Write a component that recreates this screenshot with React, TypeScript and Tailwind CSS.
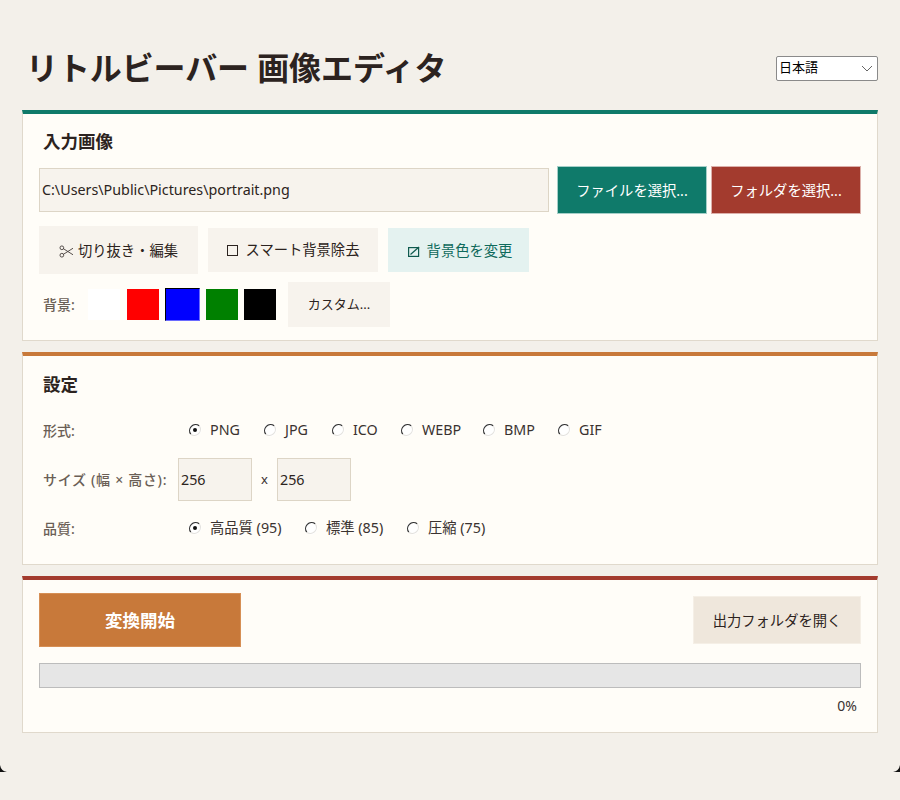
function Radio({ checked }: { checked?: boolean }) {
  return (
    <svg width="14" height="14" viewBox="0 0 14 14" className="shrink-0">
      <circle cx="7" cy="7" r="6.5" fill="#fff" />
      <path d="M11.2 2.8A6 6 0 0 0 2.8 11.2" fill="none" stroke="#333" strokeWidth="1.2" />
      <path d="M2.8 11.2A6 6 0 0 0 11.2 2.8" fill="none" stroke="#e4e2de" strokeWidth="1.2" />
      {checked && <circle cx="7" cy="7" r="2" fill="#111" />}
    </svg>
  );
}

function RadioItem({ label, checked, className }: { label: string; checked?: boolean; className: string }) {
  return (
    <div className={`flex items-center ${className}`}>
      <Radio checked={checked} />
      <span className="ml-[8px] text-[14.3px] text-[#3a3230]">{label}</span>
    </div>
  );
}

function Swatch({ color }: { color: string }) {
  return <div className={`w-[32px] h-[31px] ${color}`} />;
}

export default function App() {
  return (
    <div className="relative w-[900px] h-[800px] overflow-hidden bg-[#f3f0ea] text-[#2c2320] font-['Noto_Sans','Noto_Sans_CJK_JP',sans-serif]">
      <div className="flex flex-col px-[22px] pt-[36px]">
        <header className="flex items-center justify-between h-[64px] mb-[10px]">
          <h1 className="ml-[4px] text-[32px] font-bold leading-[46px] tracking-[-0.1px] text-[#2c2320]">リトルビーバー 画像エディタ</h1>
          <div className="relative w-[102px] h-[25px] rounded-[2px] border border-[#8a8a8a] bg-white flex items-center pl-[2px] text-[13px] text-black">
            日本語
            <svg width="12" height="7" viewBox="0 0 12 7" className="absolute right-[4px] top-[8px]">
              <path d="M1 1l5 5 5-5" fill="none" stroke="#666" strokeWidth="1" />
            </svg>
          </div>
        </header>

        <section className="h-[231px] border border-[#e0d9cc] border-t-[4px] border-t-[#0f7a6a] bg-[#fffdf8] px-[16px]">
          <h2 className="ml-[4px] mt-[13px] text-[17.5px] font-semibold leading-[28px] text-[#2c2320]">入力画像</h2>
          <div className="flex items-center mt-[11px] h-[48px]">
            <div className="w-[510px] h-[44px] flex items-center border border-[#ddd5c6] bg-[#f7f3ed] pl-[2px] text-[14.3px]">
              C:\Users\Public\Pictures\portrait.png
            </div>
            <button className="ml-[8px] w-[150px] h-[48px] pt-[2px] border border-[#a5cfc8] bg-[#0f7a6a] text-white text-[14.3px]">ファイルを選択...</button>
            <button className="ml-[4px] w-[150px] h-[48px] pt-[2px] border border-[#dcb0aa] bg-[#a33b2e] text-white text-[14.3px]">フォルダを選択...</button>
          </div>
          <div className="flex items-center mt-[12px] h-[48px]">
            <button className="flex items-center justify-center gap-[4px] w-[159px] h-[48px] pt-[2px] bg-[#f7f3ed] text-[14.3px]">
              <svg width="15" height="13" viewBox="0 0 16 14" fill="none" stroke="#4a4240" strokeWidth="1">
                <circle cx="3" cy="3" r="2" />
                <circle cx="3" cy="11" r="2" />
                <path d="M4.7 4l10.3 6.5M4.7 10L15 3.5" />
              </svg>
              切り抜き・編集
            </button>
            <button className="flex items-center justify-center ml-[10px] w-[170px] h-[44px] bg-[#f7f3ed] text-[14.3px]">
              <span className="w-[11px] h-[11px] border border-[#2c2320] mr-[8px]" />
              スマート背景除去
            </button>
            <button className="flex items-center justify-center ml-[10px] w-[141px] h-[44px] pl-[3px] pt-[2px] bg-[#e4f2f0] text-[14.3px] text-[#0f6a5c]">
              <svg width="12" height="11" viewBox="0 0 12 11" fill="none" stroke="#0f5a4e" strokeWidth="1.2" className="mr-[7px]">
                <rect x="0.6" y="1.6" width="10" height="8.8" />
                <path d="M2.5 8.5L11 1" />
              </svg>
              背景色を変更
            </button>
          </div>
          <div className="flex items-center mt-[8px] h-[45px]">
            <span className="ml-[4px] w-[45px] text-[14px] font-medium text-[#6b5f56]">背景:</span>
            <Swatch color="bg-white" />
            <Swatch color="ml-[7px] bg-[#ff0000]" />
            <div className="ml-[6px] w-[35px] h-[33px] bg-[#0000ff] border border-[#6a6aff] border-t-black border-l-black" />
            <Swatch color="ml-[6px] bg-[#008000]" />
            <Swatch color="ml-[6px] bg-black" />
            <button className="ml-[12px] w-[102px] h-[45px] bg-[#f7f3ed] text-[13px]">カスタム...</button>
          </div>
        </section>

        <section className="mt-[11px] h-[213px] border border-[#e0d9cc] border-t-[4px] border-t-[#c8793a] bg-[#fffdf8] pl-[20px] pr-[16px]">
          <h2 className="mt-[14px] text-[17.5px] font-semibold leading-[28px] text-[#2c2320]">設定</h2>
          <div className="flex items-center mt-[20px] h-[24px]">
            <span className="w-[145px] text-[14px] font-medium text-[#6b5f56]">形式:</span>
            <RadioItem label="PNG" checked className="w-[75px]" />
            <RadioItem label="JPG" className="w-[68px]" />
            <RadioItem label="ICO" className="w-[69px]" />
            <RadioItem label="WEBP" className="w-[82px]" />
            <RadioItem label="BMP" className="w-[75px]" />
            <RadioItem label="GIF" className="w-[60px]" />
          </div>
          <div className="flex items-center mt-[16px] h-[43px]">
            <span className="w-[135px] text-[14px] font-medium tracking-[0.7px] text-[#6b5f56] whitespace-nowrap">サイズ (幅 × 高さ):</span>
            <div className="w-[74px] h-[43px] flex items-center border border-[#ddd5c6] bg-[#f7f3ed] pl-[2px] text-[14.3px]">256</div>
            <span className="w-[25px] text-center text-[13px] text-[#3a3230]">x</span>
            <div className="w-[74px] h-[43px] flex items-center border border-[#ddd5c6] bg-[#f7f3ed] pl-[2px] text-[14.3px]">256</div>
          </div>
          <div className="flex items-center mt-[15px] h-[24px]">
            <span className="w-[145px] text-[14px] font-medium text-[#6b5f56]">品質:</span>
            <RadioItem label="高品質 (95)" checked className="w-[116px]" />
            <RadioItem label="標準 (85)" className="w-[102px]" />
            <RadioItem label="圧縮 (75)" className="w-[90px]" />
          </div>
        </section>

        <section className="mt-[11px] h-[157px] border border-[#e0d9cc] border-t-[4px] border-t-[#a33b2e] bg-[#fffdf8] px-[16px]">
          <div className="flex items-center justify-between mt-[13px] h-[54px]">
            <button className="w-[202px] h-[54px] border border-[#d68f55] bg-[#c8793a] text-white text-[17.5px] font-bold">変換開始</button>
            <button className="w-[168px] h-[48px] pt-[2px] border border-[#f5efe6] bg-[#efe7dc] text-[14.3px]">出力フォルダを開く</button>
          </div>
          <div className="mt-[16px] h-[25px] bg-[#e6e6e6] border border-[#bcbcbc]" />
          <div className="mt-[7px] pr-[4px] text-right text-[14px] text-[#3a3230]">0%</div>
        </section>
      </div>

      <svg width="8" height="8" viewBox="0 0 8 8" className="absolute left-0 top-[765px]">
        <path d="M0 0Q1 6 7 7H0Z" fill="#111" />
      </svg>
      <svg width="8" height="8" viewBox="0 0 8 8" className="absolute right-0 top-[765px]">
        <path d="M8 0Q7 6 1 7H8Z" fill="#111" />
      </svg>
    </div>
  );
}
